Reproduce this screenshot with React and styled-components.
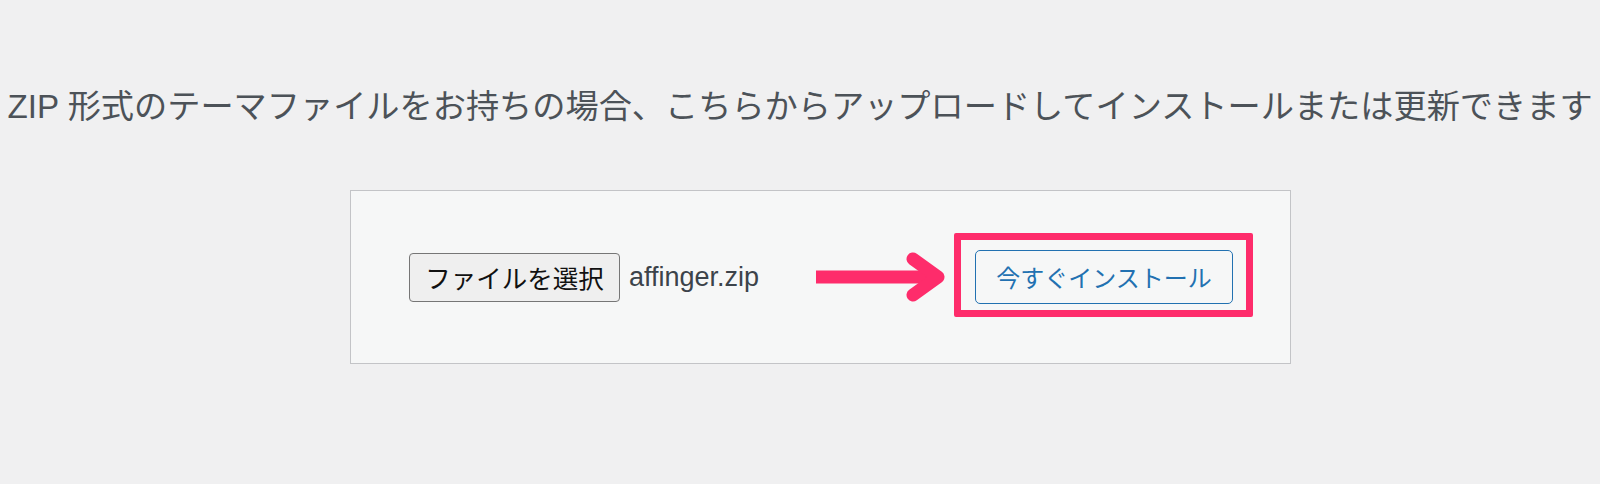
import React from "react";
import styled, { createGlobalStyle } from "styled-components";

const GlobalStyle = createGlobalStyle`
  html, body {
    margin: 0;
    padding: 0;
    background: #f0f0f1;
    font-family: "Liberation Sans", "Noto Sans CJK JP", sans-serif;
  }
`;

const Page = styled.div`
  width: 1600px;
  height: 484px;
  padding-top: 82px;
  box-sizing: border-box;
  overflow: hidden;
`;

const Help = styled.p`
  margin: 0;
  text-align: center;
  white-space: nowrap;
  font-size: 33.2px;
  line-height: 50px;
  color: #4c5258;
  font-family: "Liberation Sans", "Noto Sans CJK JP", sans-serif;
`;

const UploadCard = styled.form`
  margin: 58px 0 0 350px;
  width: 941px;
  height: 174px;
  box-sizing: border-box;
  border: 1px solid #c3c4c7;
  background: #f6f7f7;
  display: flex;
  align-items: center;
  padding-left: 58px;
`;

const FilePicker = styled.div`
  width: 407px;
  display: flex;
  align-items: center;
`;

const FileButton = styled.button`
  height: 49px;
  width: 211px;
  padding: 0;
  box-sizing: border-box;
  border: 1px solid #767676;
  border-radius: 4px;
  background: #efefef;
  color: #111;
  font-family: "Noto Sans CJK JP", sans-serif;
  font-size: 25.5px;
  line-height: 1;
  cursor: pointer;
`;

const FileName = styled.span`
  margin-left: 9px;
  font-size: 27px;
  color: #3c434a;
  font-family: "Liberation Sans", sans-serif;
`;

const Arrow = styled.svg`
  flex: none;
  display: block;
`;

const Highlight = styled.div`
  margin-left: 6px;
  margin-bottom: 4px;
  border: 7px solid #fe2c6b;
  border-radius: 2px;
  padding: 10px 13px 6px 14px;
  display: flex;
`;

const InstallButton = styled.button`
  width: 258px;
  height: 54px;
  box-sizing: border-box;
  border: 1.5px solid #2271b1;
  border-radius: 5px;
  background: #f6f7f7;
  color: #2271b1;
  font-family: "Noto Sans CJK JP", sans-serif;
  font-size: 24px;
  line-height: 1;
  padding: 0;
  cursor: pointer;
`;

export default function App() {
  return (
    <>
      <GlobalStyle />
      <Page>
        <Help>
          ZIP 形式のテーマファイルをお持ちの場合、こちらからアップロードしてインストールまたは更新できます
        </Help>
        <UploadCard onSubmit={(e) => e.preventDefault()}>
          <FilePicker>
            <FileButton type="button">ファイルを選択</FileButton>
            <FileName>affinger.zip</FileName>
          </FilePicker>
          <Arrow width="132" height="60" viewBox="0 0 132 60" aria-hidden="true">
            <rect x="0" y="23.5" width="118" height="13" fill="#fe2c6b" />
            <polyline
              points="97,12 122,30 97,48"
              fill="none"
              stroke="#fe2c6b"
              strokeWidth="13"
              strokeLinecap="round"
              strokeLinejoin="round"
            />
          </Arrow>
          <Highlight>
            <InstallButton type="submit">今すぐインストール</InstallButton>
          </Highlight>
        </UploadCard>
      </Page>
    </>
  );
}
